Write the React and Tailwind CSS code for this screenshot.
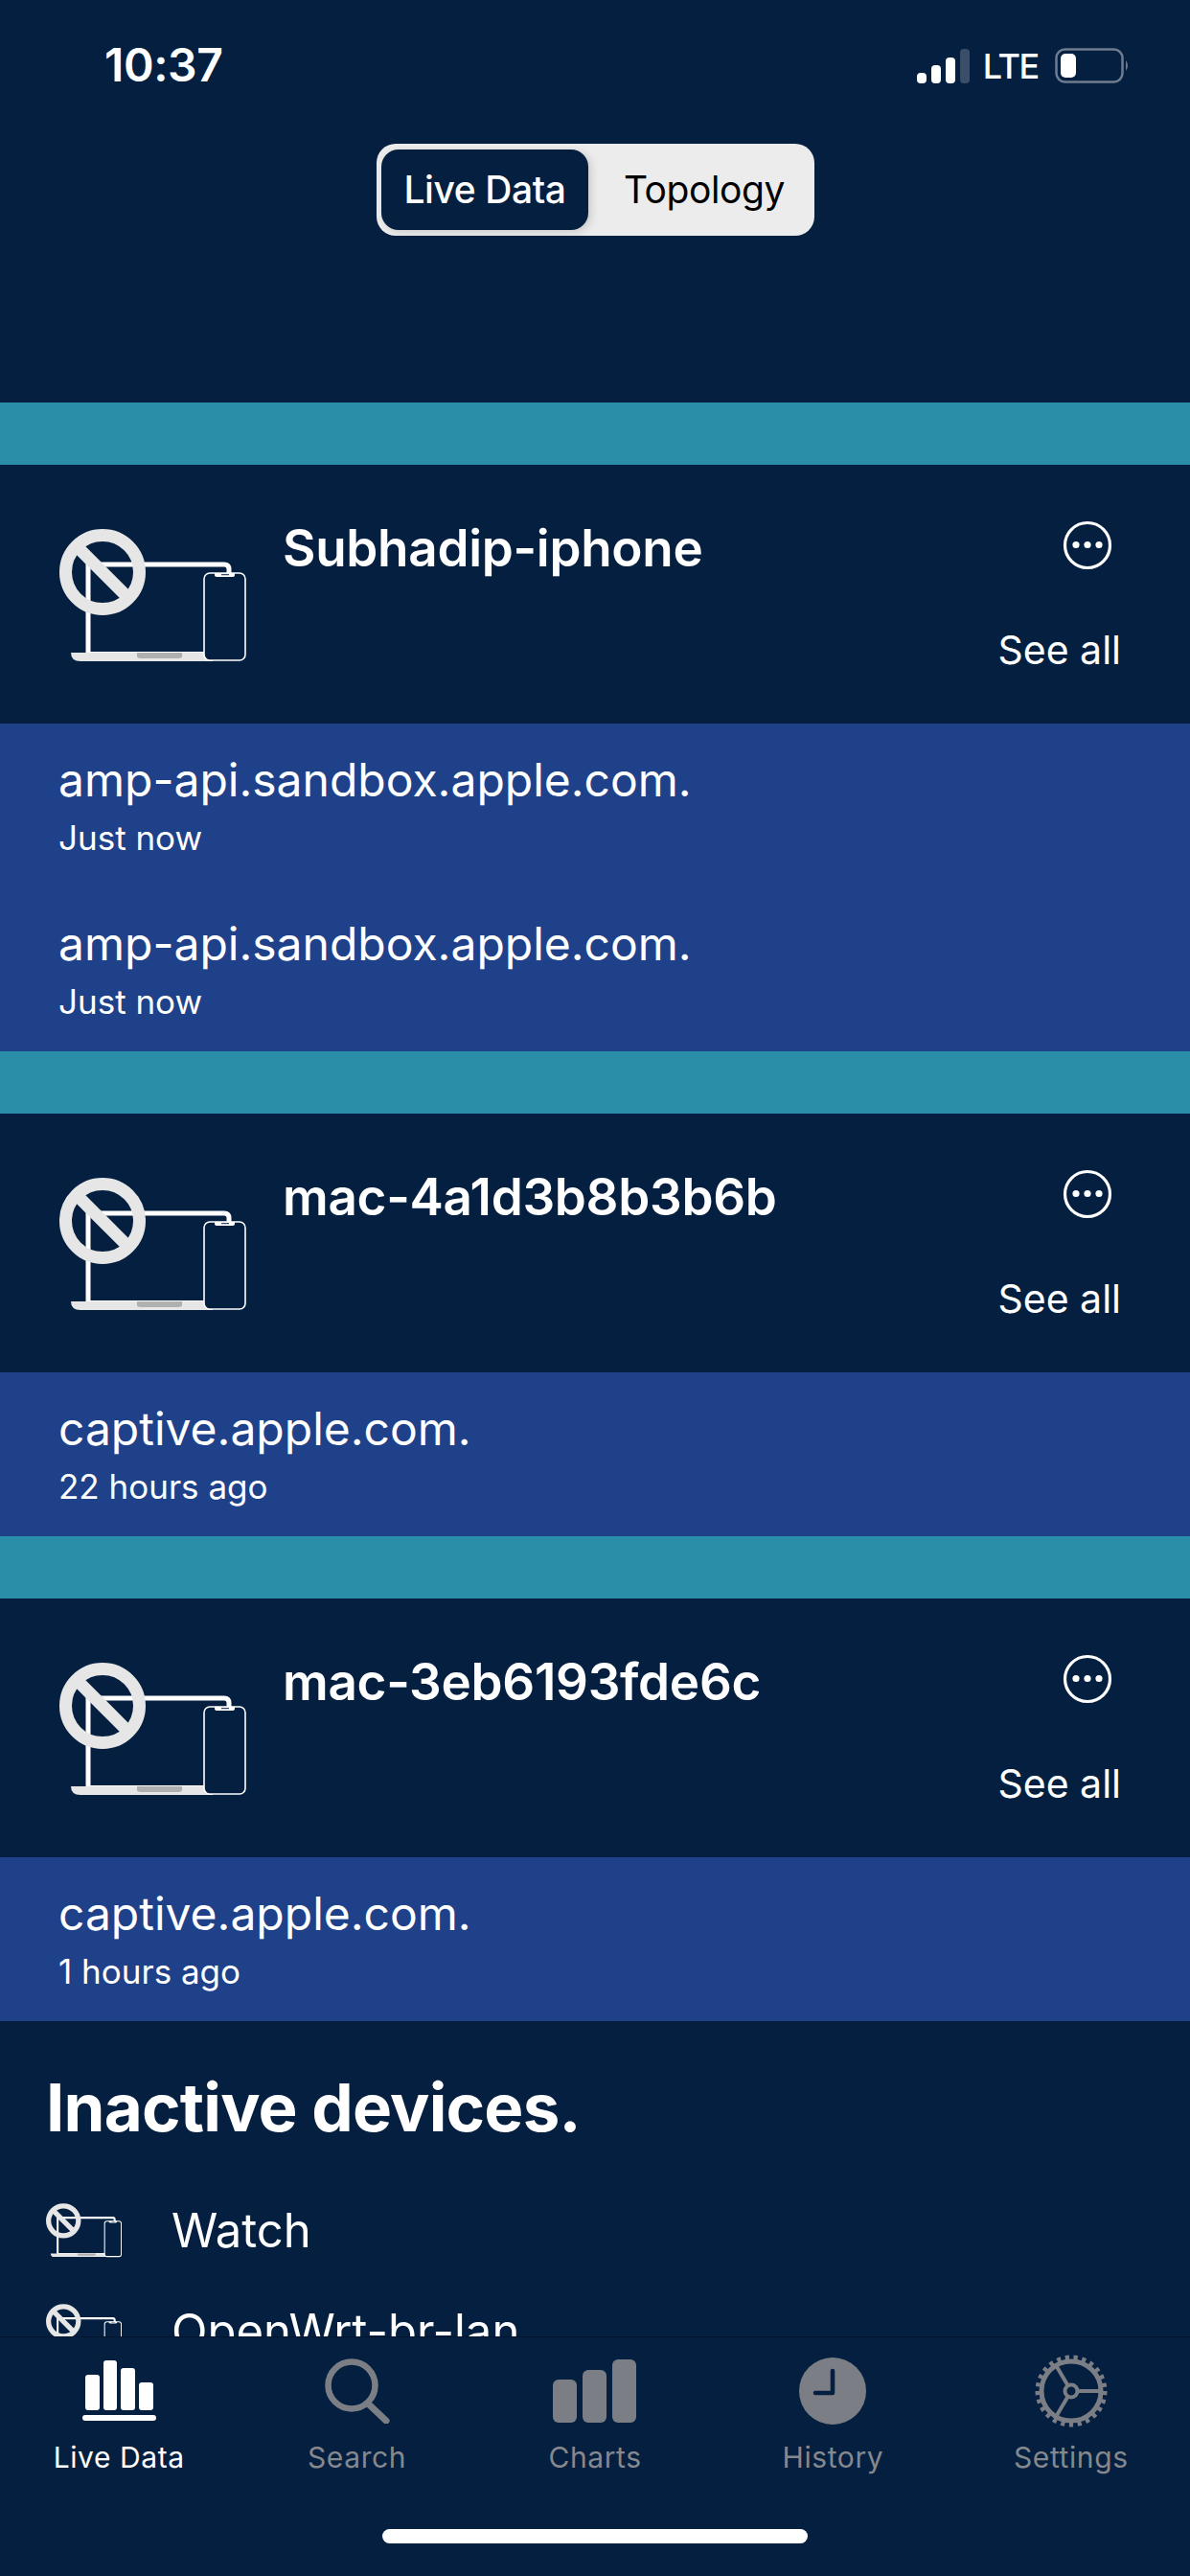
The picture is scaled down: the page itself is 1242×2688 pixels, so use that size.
const font = { fontFamily: 'Inter, "Noto Sans", sans-serif' }

const devices = [
  {
    name: 'Subhadip-iphone',
    queries: [
      { host: 'amp-api.sandbox.apple.com.', when: 'Just now' },
      { host: 'amp-api.sandbox.apple.com.', when: 'Just now' },
    ],
  },
  { name: 'mac-4a1d3b8b3b6b', queries: [{ host: 'captive.apple.com.', when: '22 hours ago' }] },
  { name: 'mac-3eb6193fde6c', queries: [{ host: 'captive.apple.com.', when: '1 hours ago' }] },
]

function DeviceIcon({ className, phoneStroke = 1.6 }) {
  return (
    <svg viewBox="0 0 195 140" className={className} fill="none">
      <path d="M30 136V37H172Q177 37 177 42V50" stroke="#fff" strokeWidth="5" />
      <rect x="30" y="128" width="125" height="5" fill="#fff" />
      <path d="M12 129H160V138H22Q12 138 12 129Z" fill="#e6e6e6" />
      <path d="M81 129H128V133Q128 135 122 135H87Q81 135 81 133Z" fill="#b0b0b0" />
      <rect x="151" y="46" width="43" height="91" rx="6" fill="#041f3f" stroke="#fff" strokeWidth={phoneStroke} />
      <path d="M162 46H183V48Q183 50 180 50H165Q162 50 162 48Z" fill="#fff" />
      <rect x="169" y="47.2" width="8" height="1" fill="#041f3f" />
      <circle cx="45" cy="45" r="38.5" stroke="#e6e6e6" strokeWidth="13" />
      <path d="M18 18L72 72" stroke="#e6e6e6" strokeWidth="13" />
    </svg>
  )
}

function SignalIcon() {
  return (
    <svg width="55" height="36" viewBox="0 0 55 36">
      <rect x="0" y="25" width="10" height="11" rx="4" fill="#fff" />
      <rect x="15" y="17" width="10" height="19" rx="4" fill="#fff" />
      <rect x="30" y="9" width="10" height="27" rx="4" fill="#fff" />
      <rect x="45" y="0" width="10" height="36" rx="4" fill="#3a4d69" />
    </svg>
  )
}

function BatteryIcon() {
  return (
    <svg width="78" height="37" viewBox="0 0 78 37">
      <rect x="1.5" y="1.5" width="69" height="34" rx="9" fill="none" stroke="#6f7c90" strokeWidth="2.5" />
      <rect x="6" y="6" width="16" height="25" rx="5" fill="#fff" />
      <path d="M74 13Q78 18.5 74 24Z" fill="#6f7c90" />
    </svg>
  )
}

function DotsIcon() {
  return (
    <svg width="52" height="52" viewBox="0 0 52 52" fill="none">
      <circle cx="26" cy="26" r="23.5" stroke="#fff" strokeWidth="3.2" />
      <circle cx="14" cy="25.5" r="3.6" fill="#fff" />
      <circle cx="26" cy="25.5" r="3.6" fill="#fff" />
      <circle cx="38" cy="25.5" r="3.6" fill="#fff" />
    </svg>
  )
}

function BarsIcon() {
  return (
    <svg width="77" height="64" viewBox="0 0 77 64" fill="#fff">
      <rect x="3" y="15" width="15" height="37" rx="3" />
      <rect x="22" y="0" width="14" height="52" rx="3" />
      <rect x="40" y="8" width="15" height="44" rx="3" />
      <rect x="59" y="23" width="15" height="29" rx="3" />
      <rect x="0" y="57" width="77" height="6" rx="3" />
    </svg>
  )
}

function SearchIcon() {
  return (
    <svg width="68" height="68" viewBox="0 0 68 68" fill="none" stroke="#7b7f85">
      <circle cx="28" cy="28" r="24.5" strokeWidth="6.5" />
      <path d="M45 47L64 65" strokeWidth="7" strokeLinecap="round" />
    </svg>
  )
}

function ChartsIcon() {
  return (
    <svg width="87" height="66" viewBox="0 0 87 66" fill="#7b7f85">
      <rect x="0" y="21" width="25" height="45" rx="6" />
      <rect x="31" y="11" width="25" height="55" rx="6" />
      <rect x="62" y="0" width="25" height="66" rx="6" />
    </svg>
  )
}

function ClockIcon() {
  return (
    <svg width="70" height="70" viewBox="0 0 70 70">
      <circle cx="35" cy="35" r="35" fill="#7b7f85" />
      <path d="M35 14V37H17" fill="none" stroke="#041f3f" strokeWidth="4.6" strokeLinecap="round" strokeLinejoin="round" />
    </svg>
  )
}

function GearIcon() {
  return (
    <svg width="76" height="76" viewBox="0 0 76 76" fill="none" stroke="#7b7f85">
      <circle cx="38" cy="38" r="31" strokeWidth="5" />
      <circle cx="38" cy="38" r="35" strokeWidth="5" strokeDasharray="4.2 4.6" />
      <circle cx="38" cy="38" r="6.5" strokeWidth="4" />
      <path d="M44.5 38H68M34.7 32.4L22 11M34.7 43.6L22 65" strokeWidth="4" />
    </svg>
  )
}

function TabItem({ icon, label, active }) {
  return (
    <div className="flex flex-col items-center">
      <div className="flex h-[76px] items-center justify-center">{icon}</div>
      <span className={`mt-[13px] text-[30px] leading-[36px] tracking-[0.6px] ${active ? 'text-white' : 'text-[#85888d]'}`}>
        {label}
      </span>
    </div>
  )
}

function DeviceCard({ device }) {
  return (
    <section>
      <div className="h-[65px] bg-[#2a8ea8]" />
      <div className="flex h-[270px] items-start pl-[62px] pr-[74px]">
        <DeviceIcon className="mt-[67px] h-[140px] w-[195px] shrink-0" />
        <div className="ml-[38px] mt-[55px] flex-1 text-[53px] leading-[64px] font-semibold tracking-[-0.3px] text-white">
          {device.name}
        </div>
        <div className="flex w-[130px] shrink-0 flex-col items-end">
          <div className="mr-[7px] mt-[58px]"><DotsIcon /></div>
          <div className="mt-[58px] mr-[-2px] text-[41px] leading-[50px] whitespace-nowrap text-white">See all</div>
        </div>
      </div>
      <div className="bg-[#1f418a]">
        {device.queries.map((q, i) => (
          <div key={i} className="h-[171px] pl-[61px] pt-[29px] text-white">
            <div className="text-[48px] leading-[60px]">{q.host}</div>
            <div className="mt-[10px] text-[35px] leading-[40px]">{q.when}</div>
          </div>
        ))}
      </div>
    </section>
  )
}

export default function App() {
  return (
    <div className="flex h-[2688px] w-[1242px] flex-col overflow-hidden bg-[#041f3f]" style={font}>
      <div className="min-h-0 flex-1 overflow-hidden">
        {/* Status bar */}
        <div className="flex h-[150px] items-start justify-between pl-[109px] pr-[63px] pt-[40px] text-white">
          <span className="text-[48px] leading-[56px] font-semibold tracking-[-0.4px]">10:37</span>
          <div className="mt-[10px] flex items-center">
            <SignalIcon />
            <span className="ml-[14px] text-[36px] leading-[36px] font-medium tracking-[-1.3px]">LTE</span>
            <div className="ml-[17px]"><BatteryIcon /></div>
          </div>
        </div>

        {/* Segmented control */}
        <div className="flex h-[270px] justify-center pl-[1px]">
          <div className="flex h-[96px] w-[457px] items-center rounded-[20px] bg-[#ececec] pl-[5px]">
            <div className="flex h-[84px] w-[216px] items-center justify-center rounded-[18px] bg-[#041f3f] text-[39px] font-medium tracking-[-0.4px] text-white shadow-[3px_2px_8px_rgba(0,0,0,0.15)]">
              Live Data
            </div>
            <div className="flex-1 pl-[6px] text-center text-[39px] font-normal tracking-[-0.4px] text-black">Topology</div>
          </div>
        </div>

        {devices.map(d => <DeviceCard key={d.name} device={d} />)}

        {/* Inactive */}
        <div className="pl-[48px] pt-[50px] text-white">
          <h2 className="text-[69px] leading-[80px] font-bold tracking-[-0.8px]">Inactive devices.</h2>
          <div className="mt-[59px] flex h-[105px] items-start">
            <DeviceIcon className="mt-[1px] h-[57px] w-[79px] shrink-0" phoneStroke={2.6} />
            <span className="ml-[52px] text-[49px] leading-[60px]">Watch</span>
          </div>
          <div className="flex h-[105px] items-start">
            <DeviceIcon className="mt-[1px] h-[57px] w-[79px] shrink-0" phoneStroke={2.6} />
            <span className="ml-[52px] text-[49px] leading-[60px]">OpenWrt-br-lan</span>
          </div>
        </div>
      </div>

      {/* Tab bar */}
      <nav className="h-[250px] shrink-0 border-t border-[#02142b] bg-[#041f3f]">
        <div className="grid h-[200px] grid-cols-5 pt-[18px]">
          <TabItem active icon={<BarsIcon />} label="Live Data" />
          <TabItem icon={<SearchIcon />} label="Search" />
          <TabItem icon={<ChartsIcon />} label="Charts" />
          <TabItem icon={<ClockIcon />} label="History" />
          <TabItem icon={<GearIcon />} label="Settings" />
        </div>
        <div className="mx-auto h-[15px] w-[444px] rounded-full bg-white" />
      </nav>
    </div>
  )
}
